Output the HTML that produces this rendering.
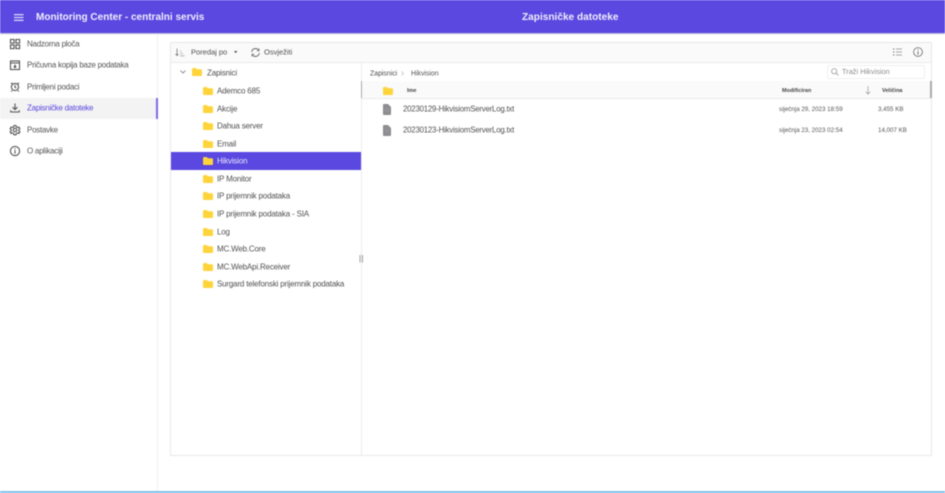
<!DOCTYPE html>
<html>
<head>
<meta charset="utf-8">
<style>
html,body{margin:0;padding:0;background:#fff}
#r{position:relative;width:945px;height:493px;overflow:hidden;background:#fff;font-family:"Liberation Sans",sans-serif;filter:blur(.4px)}
.a{position:absolute;white-space:nowrap}
.n{left:27px;font-size:8px;letter-spacing:-.26px;line-height:12px;color:#555;transform:translateY(.6px)}
.t{font-size:8px;letter-spacing:-.18px;line-height:12px;color:#505050;transform:translateY(.6px)}
svg{position:absolute;overflow:visible}
.g{fill:none;stroke:#555;stroke-width:1.1}
</style>
</head>
<body>
<div id="r">
<svg width="0" height="0"><defs><g id="f"><path d="M0 1.2C0 .5.5 0 1.2 0H3.6L5 1.3H9C9.6 1.3 10 1.8 10 2.4V7C10 7.6 9.6 8 9 8H1C.5 8 0 7.6 0 7Z" fill="#ffd43b"/></g>
<g id="d"><path d="M0 1C0 .4.4 0 1 0H5L8 3V10C8 10.6 7.6 11 7 11H1C.4 11 0 10.6 0 10Z" fill="#8d8d92"/><path d="M2 5H6M2 7H6" stroke="#a5a5a9" stroke-width=".6"/></g></defs></svg>

<div class="a" style="left:0;top:0;width:945px;height:33px;background:#5a48e0;box-shadow:0 1px 1px #b5b0d8"></div>
<svg style="left:14px;top:14px" width="10" height="8"><path d="M0 .7H9.5M0 3.5H9.5M0 6.3H9.5" stroke="#f0eefd" stroke-width="1.1"/></svg>
<div class="a" style="left:36px;top:10.5px;font-size:10px;line-height:14px;font-weight:bold;color:#f0eefd">Monitoring Center - centralni servis</div>
<div class="a" style="left:522px;top:10.5px;font-size:10.1px;line-height:14px;font-weight:bold;color:#f0eefd">Zapisničke datoteke</div>

<div class="a" style="left:157px;top:34px;width:1px;height:458px;background:#efeff1"></div>
<div class="a" style="left:0;top:98px;width:156px;height:21px;background:#f3f3f3"></div>
<div class="a" style="left:156px;top:98px;width:1.5px;height:21px;background:#7a6be6"></div>

<svg class="g" style="left:10px;top:39px" width="10" height="10"><rect x=".5" y=".5" width="3.6" height="3.6"/><rect x="6" y=".5" width="3.6" height="3.6"/><rect x=".5" y="6" width="3.6" height="3.6"/><rect x="6" y="6" width="3.6" height="3.6"/></svg>
<div class="a n" style="top:38px">Nadzorna ploča</div>
<svg class="g" style="left:10px;top:60px" width="10" height="10"><rect x=".5" y="1" width="9" height="8.5"/><path d="M.5 3H9.5M5 4.5V7.5M3.7 6.3L5 7.6 6.3 6.3"/></svg>
<div class="a n" style="top:59px">Pričuvna kopija baze podataka</div>
<svg class="g" style="left:10px;top:82px" width="10" height="10"><circle cx="5" cy="5" r="3.6"/><path d="M5 3V5.2L6.3 6M1 2L2.3 .8M9 2L7.7 .8M2 8.5L1.2 9.5M8 8.5L8.8 9.5"/></svg>
<div class="a n" style="top:80.5px">Primljeni podaci</div>
<svg class="g" style="left:10px;top:103px" width="10" height="10"><path d="M5 .5V6.5M2.6 4.2L5 6.6 7.4 4.2M.8 7.3V9H9.2V7.3"/></svg>
<div class="a n" style="top:102px;color:#5a48e0">Zapisničke datoteke</div>
<svg class="g" style="left:10px;top:125px" width="10" height="10"><circle cx="5" cy="5" r="1.7"/><path d="M4 .5H6L6.3 1.9 7.5 2.5 8.9 2 9.9 3.8 8.8 4.6V5.9L9.9 6.7 8.9 8.4 7.5 7.9 6.3 8.6 6 9.8H4L3.7 8.6 2.5 7.9 1.1 8.4.1 6.7 1.2 5.9V4.6L.1 3.8 1.1 2 2.5 2.5 3.7 1.9Z"/></svg>
<div class="a n" style="top:123.5px">Postavke</div>
<svg class="g" style="left:9.5px;top:146px" width="11" height="11"><circle cx="5" cy="5" r="4.6"/><path d="M5 4.3V7.6M5 2.4V3.4"/></svg>
<div class="a n" style="top:145px">O aplikaciji</div>

<!-- file manager -->
<div class="a" style="left:169.5px;top:42px;width:762px;height:414px;box-sizing:border-box;border:1px solid #e8e8ec;background:#fff"></div>
<div class="a" style="left:170.5px;top:43px;width:760px;height:19px;background:#fafafa;border-bottom:1px solid #ebebee"></div>
<svg style="left:175px;top:48px" width="10" height="9"><path d="M2 .5V7.5M.5 6L2 7.5 3.5 6" fill="none" stroke="#777" stroke-width=".8"/><path d="M5 7.8H9.5M5 5.5H8M5 3.2H6.5" stroke="#aaa" stroke-width=".8"/></svg>
<div class="a t" style="left:191px;top:46px;font-size:7.6px;letter-spacing:-.05px">Poredaj po</div>
<svg style="left:234px;top:51px" width="4" height="3"><path d="M0 0H3.4L1.7 2.2Z" fill="#555"/></svg>
<svg style="left:251px;top:48px" width="9" height="9"><path d="M.7 4A3.8 3.8 0 0 1 7.6 2.2M8.3 5A3.8 3.8 0 0 1 1.4 6.8" fill="none" stroke="#555" stroke-width=".8"/><path d="M8 .5V2.8H5.8M1 8.5V6.2H3.2" fill="none" stroke="#555" stroke-width=".7"/></svg>
<div class="a t" style="left:264px;top:46px;font-size:7.6px;letter-spacing:-.05px">Osvježiti</div>
<svg style="left:893px;top:48px" width="10" height="9"><path d="M0 1H1.3M0 4H1.3M0 7H1.3" stroke="#6a6a70" stroke-width="1"/><path d="M3 1H9M3 4H9M3 7H9" stroke="#8a8a90" stroke-width=".8"/></svg>
<svg style="left:913px;top:47px" width="10" height="10"><circle cx="5" cy="5" r="4.4" fill="none" stroke="#666" stroke-width=".8"/><path d="M5 4.3V7.7M5 2.3V3.3" stroke="#666" stroke-width=".9"/></svg>

<!-- tree -->
<div class="a" style="left:361px;top:63px;width:1px;height:392px;background:#ececef"></div>
<svg style="left:180px;top:70px" width="6" height="4"><path d="M.5.5L3 3 5.5.5" fill="none" stroke="#777" stroke-width=".8"/></svg>
<svg style="left:192px;top:68px" width="10" height="8"><use href="#f"/></svg>
<div class="a t" style="left:207px;top:66.5px">Zapisnici</div>
<div class="a" style="left:170.5px;top:152px;width:190.5px;height:18px;background:#5a48e0"></div>

<svg style="left:203px;top:87px" width="10" height="8"><use href="#f"/></svg><div class="a t" style="left:217px;top:85px">Ademco 685</div>
<svg style="left:203px;top:104.5px" width="10" height="8"><use href="#f"/></svg><div class="a t" style="left:217px;top:102.5px">Akcije</div>
<svg style="left:203px;top:122px" width="10" height="8"><use href="#f"/></svg><div class="a t" style="left:217px;top:120px">Dahua server</div>
<svg style="left:203px;top:139.5px" width="10" height="8"><use href="#f"/></svg><div class="a t" style="left:217px;top:137.5px">Email</div>
<svg style="left:203px;top:157px" width="10" height="8"><use href="#f"/></svg><div class="a t" style="left:217px;top:155px;color:#e6e3fb">Hikvision</div>
<svg style="left:203px;top:174.5px" width="10" height="8"><use href="#f"/></svg><div class="a t" style="left:217px;top:172.5px">IP Monitor</div>
<svg style="left:203px;top:192px" width="10" height="8"><use href="#f"/></svg><div class="a t" style="left:217px;top:190px">IP prijemnik podataka</div>
<svg style="left:203px;top:210px" width="10" height="8"><use href="#f"/></svg><div class="a t" style="left:217px;top:208px">IP prijemnik podataka - SIA</div>
<svg style="left:203px;top:227.5px" width="10" height="8"><use href="#f"/></svg><div class="a t" style="left:217px;top:225.5px">Log</div>
<svg style="left:203px;top:245px" width="10" height="8"><use href="#f"/></svg><div class="a t" style="left:217px;top:243px">MC.Web.Core</div>
<svg style="left:203px;top:262.5px" width="10" height="8"><use href="#f"/></svg><div class="a t" style="left:217px;top:260.5px">MC.WebApi.Receiver</div>
<svg style="left:203px;top:280px" width="10" height="8"><use href="#f"/></svg><div class="a t" style="left:217px;top:278px">Surgard telefonski prijemnik podataka</div>
<svg style="left:359px;top:255px" width="5" height="8"><path d="M1 0V7.5M3.5 0V7.5" stroke="#8a8a8a" stroke-width=".8"/></svg>

<!-- details -->
<div class="a t" style="left:370px;top:68px;font-size:7px;letter-spacing:-.05px">Zapisnici</div>
<svg style="left:401px;top:71px" width="4" height="5"><path d="M.5.5L2.5 2.5.5 4.5" fill="none" stroke="#bbb" stroke-width=".7"/></svg>
<div class="a t" style="left:411px;top:68px;font-size:7px;letter-spacing:-.05px;color:#555">Hikvision</div>
<div class="a" style="left:827px;top:65px;width:98px;height:14px;box-sizing:border-box;border:1px solid #f0f0f3;border-radius:2px;background:#fff"></div>
<svg style="left:831px;top:68px" width="8" height="8"><circle cx="3.2" cy="3.2" r="2.6" fill="none" stroke="#999" stroke-width=".8"/><path d="M5.2 5.2L7.5 7.5" stroke="#999" stroke-width=".8"/></svg>
<div class="a" style="left:842px;top:66px;font-size:7.4px;line-height:12px;color:#8c8c8c">Traži Hikvision</div>

<div class="a" style="left:362px;top:81px;width:569px;height:17px;background:#fafafa;border-bottom:1px solid #ebebee"></div>
<div class="a" style="left:361px;top:81px;width:1px;height:17px;background:#aaa"></div>
<div class="a" style="left:930px;top:81px;width:1.5px;height:17px;background:#aaa"></div>
<svg style="left:383px;top:87px" width="10" height="8"><use href="#f"/></svg>
<div class="a" style="left:407px;top:87px;font-size:5.5px;line-height:8px;font-weight:bold;color:#444">Ime</div>
<div class="a" style="left:782px;top:87px;font-size:5.5px;line-height:8px;font-weight:bold;color:#444">Modificiran</div>
<svg style="left:865px;top:86px" width="6" height="9"><path d="M3 0V8M.7 5.7L3 8 5.3 5.7" fill="none" stroke="#999" stroke-width=".7"/></svg>
<div class="a" style="left:882px;top:87px;font-size:5.5px;line-height:8px;font-weight:bold;color:#444">Veličina</div>

<svg style="left:383px;top:103.5px" width="8" height="11"><use href="#d"/></svg>
<div class="a t" style="left:403px;top:103px;font-size:7.8px;letter-spacing:-.19px">20230129-HikvisiomServerLog.txt</div>
<div class="a" style="left:779px;top:104.5px;font-size:6.2px;line-height:9px;color:#555">siječnja 29, 2023 18:59</div>
<div class="a" style="left:878px;top:104.5px;font-size:6.2px;line-height:9px;color:#555">3,455 KB</div>

<svg style="left:383px;top:124.5px" width="8" height="11"><use href="#d"/></svg>
<div class="a t" style="left:403px;top:124px;font-size:7.8px;letter-spacing:-.19px">20230123-HikvisiomServerLog.txt</div>
<div class="a" style="left:779px;top:125.5px;font-size:6.2px;line-height:9px;color:#555">siječnja 23, 2023 02:54</div>
<div class="a" style="left:878px;top:125.5px;font-size:6.2px;line-height:9px;color:#555">14,007 KB</div>

<div class="a" style="left:0;top:491px;width:945px;height:4px;background:#7fc0e8"></div>
</div>
</body>
</html>
